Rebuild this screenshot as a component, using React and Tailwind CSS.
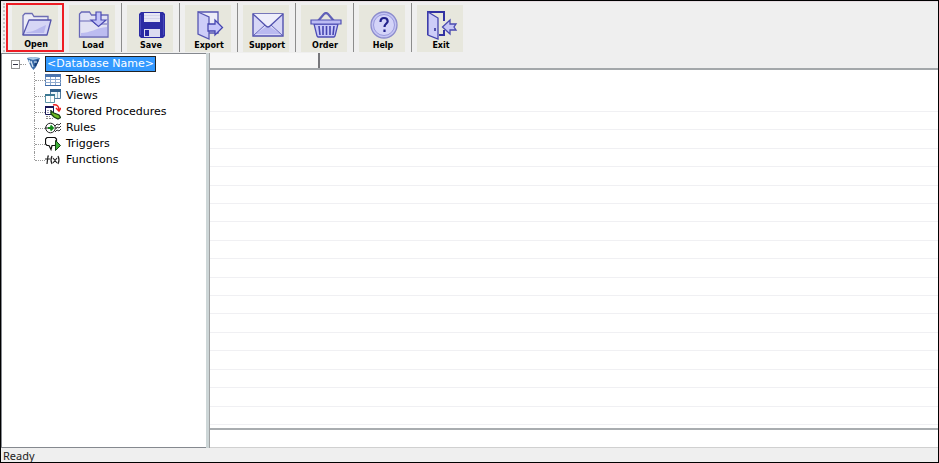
import { useState } from 'react';

const OpenIcon = () => (
  <svg width="32" height="26" viewBox="0 0 32 26" className="block">
    <path d="M2 23V3.500l2-2h7l2 3h14v4" fill="#ececf6" stroke="#6c6cb4" strokeWidth="1.300" />
    <path d="M2 23L8 8h22l-4 15z" fill="#d6d6f6" stroke="#5454ac" strokeWidth="1.300" strokeLinejoin="round" />
    <path d="M6 20c8 0 13-5 19-7l-2 8H5z" fill="#b8b8ee" />
  </svg>
);

const LoadIcon = () => (
  <svg width="32" height="28" viewBox="0 0 32 28" className="block">
    <path d="M1.500 26V3l2-2h8l2 3h16.500v22z" fill="#e2e2f4" stroke="#6868b8" strokeWidth="1.300" />
    <path d="M2 10h12l3 3h12" fill="none" stroke="#6868b8" />
    <path d="M3 22c9 0 15-5 26-6v9H3z" fill="#bcbcf0" />
    <path d="M18 1h5v8h5l-7.500 6.500L13 9h5z" fill="#c2c2f8" stroke="#4a4ab2" strokeWidth="1.200" />
  </svg>
);

const SaveIcon = () => (
  <svg width="28" height="28" viewBox="0 0 28 28" className="block">
    <path d="M3 1h22l2 2v22l-2 2H3l-2-2V3z" fill="#2c2ca4" />
    <path d="M6 2h16v9H6z" fill="#e6e6f4" />
    <path d="M6 4.500h16M6 7.500h16" stroke="#d2d2ea" />
    <path d="M6 18h16v8H6z" fill="#dcdcf0" />
    <path d="M7 19h4v6H7z" fill="#2828a0" />
    <path d="M2.500 4v20M25.500 4v20" stroke="#4a4abc" />
  </svg>
);

const ExportIcon = () => (
  <svg width="28" height="31" viewBox="0 0 28 31" className="block">
    <path d="M2 2h20v21H12" fill="#ececf8" stroke="#5656b2" strokeWidth="1.300" />
    <path d="M2 2l11 5v22L2 24z" fill="#cdcdf8" stroke="#5656b2" strokeWidth="1.300" />
    <path d="M12 14h7v-4l7.500 7.500L19 25v-4h-7z" fill="#c6c6fa" stroke="#4646b0" strokeWidth="1.300" />
  </svg>
);

const SupportIcon = () => (
  <svg width="32" height="24" viewBox="0 0 32 24" className="block">
    <path d="M1 1h30v22H1z" fill="#d6d6f6" stroke="#5252ae" strokeWidth="1.400" />
    <path d="M3 21L14 14q2 2 4 0l11 7z" fill="#babaf0" />
    <path d="M2 22l11-10M30 22L19 12" stroke="#6767be" />
    <path d="M1 1l13 12q2 2 4 0L31 1" fill="#eeeefb" stroke="#5252ae" strokeWidth="1.300" />
  </svg>
);

const OrderIcon = () => (
  <svg width="32" height="26" viewBox="0 0 32 26" className="block">
    <path d="M8 9l6-7q2-2 4 0l6 7" fill="none" stroke="#6060b8" strokeWidth="2.200" />
    <path d="M4 12h24l-3 12-1 1H8l-1-1z" fill="#c8c8fa" stroke="#4c4cb4" strokeWidth="1.300" />
    <path d="M1 8h30v4H1z" fill="#bcbcf4" stroke="#5050b4" strokeWidth="1.200" />
    <path d="M9 14l1 9M13 14v9M16.500 14v9M20 14v9M24 14l-1 9" stroke="#4545b0" strokeWidth="1.600" />
  </svg>
);

const HelpIcon = () => (
  <svg width="28" height="28" viewBox="0 0 28 28" className="block">
    <circle cx="14" cy="14" r="13" fill="#c5c5f4" stroke="#8c8ccc" strokeWidth="1.300" />
    <circle cx="14" cy="14" r="10.500" fill="#d4d4f8" stroke="#9a9adc" />
    <path d="M10.500 11q0-4 3.500-4t3.700 3.200c0 2.300-3.200 2.500-3.200 5.800M14.500 18.500V21" fill="none" stroke="#22228c" strokeWidth="2.200" />
  </svg>
);

const ExitIcon = () => (
  <svg width="32" height="31" viewBox="0 0 32 31" className="block">
    <path d="M2 25V2h16v9M18 20v5h-5" fill="none" stroke="#3232a2" strokeWidth="2" />
    <path d="M2 2l10 6v21L2 25z" fill="#cdcdf8" stroke="#4545ae" strokeWidth="1.300" />
    <path d="M9 18v3" stroke="#2a2a92" strokeWidth="1.500" />
    <path d="M30 14h-6v-4l-7.500 7 7.500 7v-4h6l-2-3z" fill="#c6c6f6" stroke="#4a4ab0" strokeWidth="1.300" />
  </svg>
);

const DatabaseIcon = () => (
  <svg width="16" height="16" viewBox="0 0 16 16" className="block">
    <path d="M1 2l6-1 7 1-4 9-2.500 3L5 11z" fill="#3b6ca8" />
    <path d="M1 2l6 2 7-2-7-1z" fill="#a9c8e6" />
    <path d="M5 5l2 6M3 4l1 3" stroke="#d8e8f6" strokeWidth="1.200" />
    <path d="M9 10l3-6" stroke="#173e78" strokeWidth="2" />
    <path d="M8 6h3" stroke="#c4dbf0" strokeWidth="1.200" />
  </svg>
);

const TablesIcon = () => (
  <svg width="16" height="16" viewBox="0 0 16 16" className="block">
    <path d="M.5 2.500h15v11H.5z" fill="#fff" stroke="#5f85b8" />
    <path d="M0 2h16v3H0z" fill="#4a74ae" />
    <path d="M0 7.500h16M0 10.500h16M5.500 5v9M10.500 5v9" stroke="#8fabd0" />
    <path d="M0 13.500h16" stroke="#3d69a6" />
  </svg>
);

const ViewsIcon = () => (
  <svg width="16" height="16" viewBox="0 0 16 16" className="block">
    <path d="M5.500 1.500h10v9h-10z" fill="#eef7fa" stroke="#4d789d" />
    <path d="M5 1h11v3H5z" fill="#2f608c" />
    <path d="M12.500 4v6" stroke="#8fb5c8" />
    <path d="M.5 6.500h9v8h-9z" fill="#fff" stroke="#5c93a5" />
    <path d="M0 6h10v2H0z" fill="#3a7893" />
    <path d="M5.500 8v6" stroke="#a9cbd3" />
  </svg>
);

const ProceduresIcon = () => (
  <svg width="16" height="16" viewBox="0 0 16 16" className="block">
    <path d="M.5 2.500h8v8h-8z" fill="#fff" stroke="#161658" />
    <path d="M0 2h9v2H0z" fill="#161658" />
    <path d="M2 6.500h5M2 8.500h5" stroke="#9a9ab8" strokeDasharray="2 1" />
    <path d="M1 12.500h4M1 14.500h7" stroke="#858585" strokeDasharray="2 1" />
    <path d="M8 1q6-1 6 5M11 4l3 3 2-3" fill="none" stroke="#ed2020" strokeWidth="1.500" />
    <path d="M6 7l3 2 5 2 1.500 2.500L13 15l-4-2-3-3z" fill="#6fba24" stroke="#183e12" strokeWidth="1.300" />
  </svg>
);

const RulesIcon = () => (
  <svg width="16" height="16" viewBox="0 0 16 16" className="block">
    <circle cx="5.500" cy="8" r="4.800" fill="#fff" stroke="#222" />
    <path d="M0 8h3" stroke="#222" />
    <path d="M3 8h5M5.500 5.500L8 8l-2.500 2.500" fill="none" stroke="#118918" strokeWidth="1.800" />
    <path d="M10 6l2-2 2 1 2-2M11 9l1-2 2 1 2-2M10 12l2-2 2 1 2-2" fill="none" stroke="#333" />
  </svg>
);

const TriggersIcon = () => (
  <svg width="16" height="16" viewBox="0 0 16 16" className="block">
    <path d="M2 1.500h8l1.500 1.500v5L10 9.500H7l-1 4-2-4H2L.5 8V3z" fill="#fff" stroke="#111" strokeWidth="1.200" />
    <path d="M10.500 4.500v10l5-5z" fill="#3cae36" stroke="#123f12" />
  </svg>
);

const FunctionsIcon = () => (
  <svg width="16" height="16" viewBox="0 0 16 16" className="block">
    <path d="M4 4H3L2 12M0 7h5M7 4Q5 8 7 12M8 6l4 5M12 6l-4 5M13 4q2 4 0 8" fill="none" stroke="#222" strokeWidth="1.200" />
  </svg>
);

const tools = [
  { label: 'Open', Icon: OpenIcon },
  { label: 'Load', Icon: LoadIcon },
  { label: 'Save', Icon: SaveIcon },
  { label: 'Export', Icon: ExportIcon },
  { label: 'Support', Icon: SupportIcon },
  { label: 'Order', Icon: OrderIcon },
  { label: 'Help', Icon: HelpIcon },
  { label: 'Exit', Icon: ExitIcon },
];

const nodes = [
  { label: 'Tables', Icon: TablesIcon },
  { label: 'Views', Icon: ViewsIcon },
  { label: 'Stored Procedures', Icon: ProceduresIcon },
  { label: 'Rules', Icon: RulesIcon },
  { label: 'Triggers', Icon: TriggersIcon },
  { label: 'Functions', Icon: FunctionsIcon },
];

const ToolButton = ({ label, Icon, active, last }) => (
  <div
    className={
      active
        ? 'flex w-[58px] justify-center border-2 border-[#ee1c24]'
        : `flex w-[58px] pt-0.5 pl-[5px] ${last ? '' : 'border-r border-[#8c8c8c]'}`
    }
  >
    <button type="button" className="flex w-[46px] flex-col items-center bg-[#e7e7dd] pl-0.5">
      <span className="flex h-9 items-center pt-1 pl-0.5">
        <Icon />
      </span>
      <span className="text-[8px] leading-[10px] font-bold text-black">{label}</span>
    </button>
  </div>
);

const App = () => {
  const [expanded, setExpanded] = useState(true);
  const [selected, setSelected] = useState('root');

  return (
    <div className="flex h-screen flex-col overflow-hidden border border-black bg-[#efefef] font-['DejaVu_Sans',Verdana,sans-serif] text-[11px] text-black">
      <header className="flex h-[52px] shrink-0 border-t border-[#e6dce2] pt-px pb-px">
        <div className="mr-px w-1 border-r-2 border-dotted border-[#c4c4c4]" />
        {tools.map((tool, index) => (
          <ToolButton key={tool.label} {...tool} active={index === 0} last={index === tools.length - 1} />
        ))}
      </header>

      <div className="flex min-h-0 flex-1">
        <aside className="flex w-[209px] shrink-0 border-r border-[#a0a2a3] bg-[#cdd6d7]">
          <div className="mr-[3px] flex-1 border-t border-b border-l border-[#85898f] bg-white pt-0.5">
            <div className="flex h-4 items-center pl-[9px]">
              <button
                type="button"
                aria-label={expanded ? 'Collapse' : 'Expand'}
                onClick={() => setExpanded(!expanded)}
                className="flex size-[9px] items-center justify-center border border-[#919191] bg-white"
              >
                <svg width="5" height="5" viewBox="0 0 5 5" className="block">
                  <path d={expanded ? 'M0 2.500h5' : 'M0 2.500h5M2.500 0v5'} stroke="#334" />
                </svg>
              </button>
              <span className="w-[6px] border-t border-dotted border-[#9a9a9a]" />
              <DatabaseIcon />
              <button
                type="button"
                onClick={() => setSelected('root')}
                className={`ml-[3px] h-4 px-px leading-[14px] ${selected === 'root' ? 'border border-[#222] bg-[#3399ff] text-white' : ''}`}
              >
                {'<Database Name>'}
              </button>
            </div>
            {expanded && (
              <ul className="ml-8">
                {nodes.map(({ label, Icon }, index) => (
                  <li key={label} className="flex h-4 items-center">
                    <span
                      className={`self-start border-l border-dotted border-[#9a9a9a] ${index === nodes.length - 1 ? 'h-2' : 'h-4'}`}
                    />
                    <span className="w-[10px] border-t border-dotted border-[#9a9a9a]" />
                    <Icon />
                    <button
                      type="button"
                      onClick={() => setSelected(label)}
                      className={`ml-[3px] h-4 px-0.5 leading-4 ${selected === label ? 'bg-[#3399ff] text-white' : ''}`}
                    >
                      {label}
                    </button>
                  </li>
                ))}
              </ul>
            )}
          </div>
        </aside>

        <main className="flex min-w-0 flex-1 flex-col border-b border-[#d0d0d0] bg-white">
          <div className="flex h-[17px] shrink-0 border-b-2 border-[#a3a7aa] bg-[#efefef]">
            <div className="w-[110px] border-r-2 border-[#77777b] bg-[#f6f6f6]" />
          </div>
          <div className="h-[42px] shrink-0 border-b border-[#f0f0f3]" />
          {Array.from({ length: 17 }, (_, row) => (
            <div key={row} className="flex-1 border-b border-[#f0f0f3]" />
          ))}
          <div className="h-[5px] shrink-0 border-b-2 border-[#a9adb0]" />
          <div className="h-[17px] shrink-0" />
        </main>
      </div>

      <footer className="h-[14px] shrink-0 pl-0.5 font-['Noto_Sans',sans-serif] text-[11px] leading-4 text-[#222]">
        Ready
      </footer>
    </div>
  );
};

export default App;
